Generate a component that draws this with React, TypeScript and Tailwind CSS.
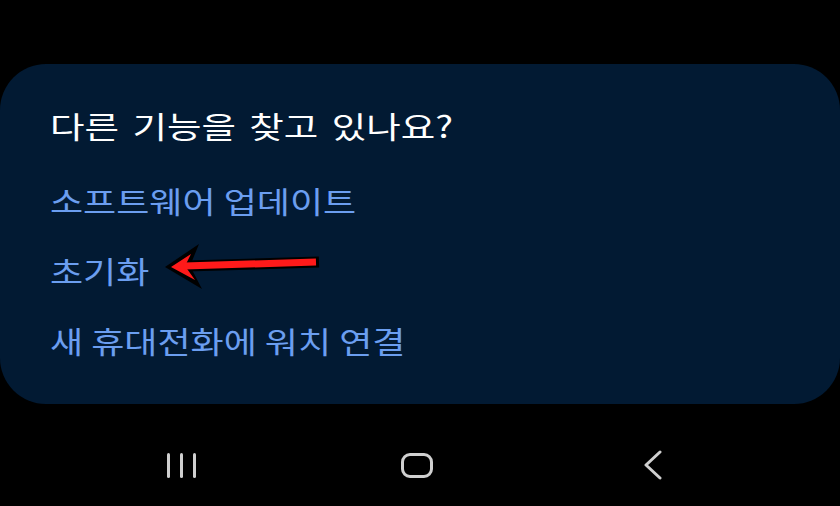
import React from 'react';

const links = ['소프트웨어 업데이트', '초기화', '새 휴대전화에 워치 연결'];

function Arrow() {
  return (
    <svg
      className="absolute left-[160px] top-[176px] w-[170px] h-[56px]"
      viewBox="160 240 170 56"
      fill="none"
    >
      <line x1="319" y1="262" x2="186" y2="266" stroke="#000" strokeWidth="11" />
      <polygon points="165,267 199,244 190,266 202,289" fill="#000" />
      <polygon points="171,267 191,254 185,266 195,280" fill="#ff1a1a" />
      <line x1="316" y1="262" x2="184" y2="266" stroke="#ff1a1a" strokeWidth="7" />
    </svg>
  );
}

function NavBar() {
  return (
    <div className="flex flex-1 items-center justify-center pr-[6px] pt-[20px]">
      <div className="flex w-[236px] justify-center">
        <div className="flex gap-[10px]">
          <span className="block h-[25px] w-[3px] rounded-full bg-[#cfcfcf]" />
          <span className="block h-[25px] w-[3px] rounded-full bg-[#cfcfcf]" />
          <span className="block h-[25px] w-[3px] rounded-full bg-[#cfcfcf]" />
        </div>
      </div>
      <div className="flex w-[236px] justify-center">
        <span className="block h-[25px] w-[32px] rounded-[9px] border-[3px] border-[#d0d0d0]" />
      </div>
      <div className="flex w-[236px] justify-center">
        <svg width="22" height="30" viewBox="0 0 22 30" fill="none">
          <polyline
            points="18,2 4,15 18,28"
            stroke="#cfcfcf"
            strokeWidth="3"
            strokeLinecap="round"
            strokeLinejoin="round"
          />
        </svg>
      </div>
    </div>
  );
}

export default function App() {
  return (
    <div
      className="flex h-[506px] w-[840px] flex-col overflow-hidden bg-black"
      style={{ fontFamily: '"Noto Sans CJK KR", "Noto Sans", sans-serif' }}
    >
      <div className="h-[64px] shrink-0" />
      <div className="relative h-[340px] shrink-0 rounded-[46px] bg-[#021a33] pl-[50px] pt-[41px]">
        <h2 className="inline-block origin-left scale-x-[1.25] text-[30px] leading-[40px] font-normal text-white [word-spacing:4px]">
          다른 기능을 찾고 있나요?
        </h2>
        <div className="mt-[35px] flex flex-col items-start gap-[30px]">
          {links.map((t) => (
            <div
              key={t}
              className="inline-block origin-left scale-x-[1.2] text-[30px] leading-[40px] text-[#6b9ef0]"
            >
              {t}
            </div>
          ))}
        </div>
        <Arrow />
      </div>
      <NavBar />
    </div>
  );
}
